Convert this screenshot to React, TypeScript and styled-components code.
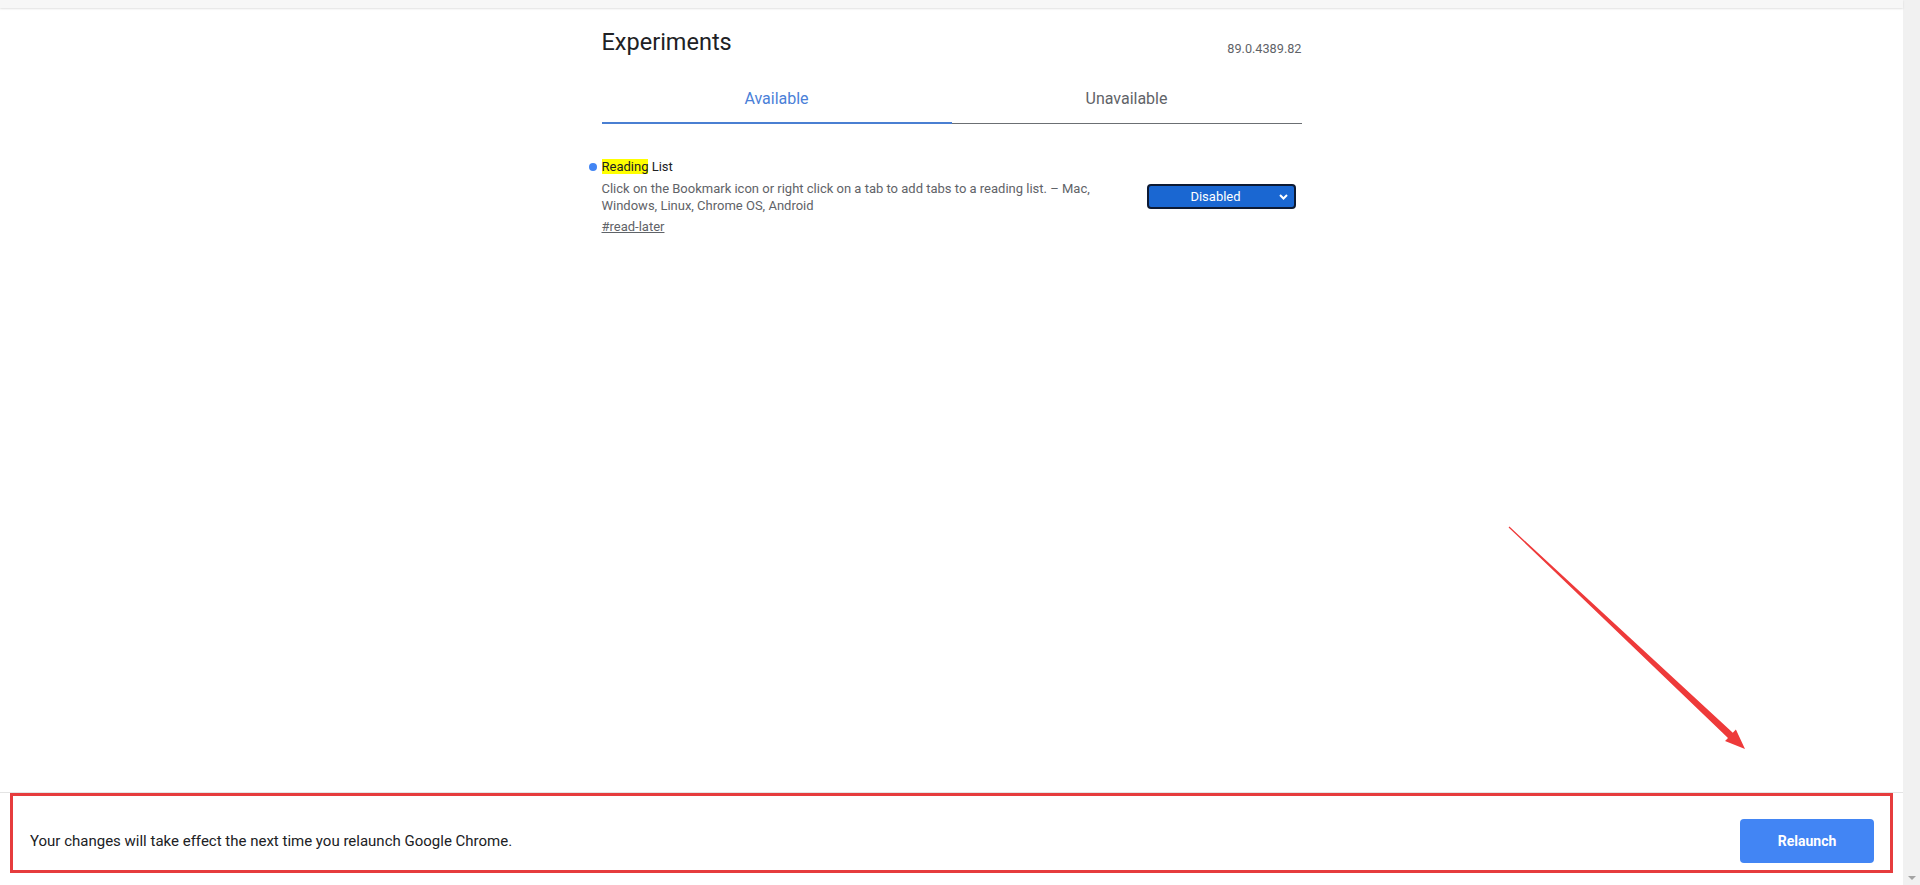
import * as React from "react";
import styled, { createGlobalStyle } from "styled-components";

const GlobalStyle = createGlobalStyle`
  html, body {
    margin: 0;
    height: 100%;
    overflow: hidden;
    background: #fff;
    font-family: Roboto, "Liberation Sans", sans-serif;
  }
  #root {
    height: 100%;
  }
`;

const Shell = styled.div`
  display: flex;
  width: 100vw;
  height: 100vh;
`;

const Page = styled.div`
  position: relative;
  flex: 1;
  display: flex;
  flex-direction: column;
  min-width: 0;
  background: #fff;
`;

const TopStrip = styled.div`
  height: 8px;
  flex: 0 0 8px;
  background: #f7f7f7;
  box-shadow: 0 1px 2px rgba(0, 0, 0, 0.12);
  position: relative;
  z-index: 1;
`;

const Main = styled.main`
  flex: 1;
  display: flex;
  justify-content: center;
`;

const Column = styled.div`
  width: 700px;
`;

const HeaderRow = styled.div`
  display: flex;
  justify-content: space-between;
  align-items: flex-start;
  margin-top: 20px;
`;

const Title = styled.h1`
  margin: 0;
  font-size: 23.5px;
  line-height: 28px;
  font-weight: 400;
  color: #202124;
`;

const Version = styled.span`
  margin-top: 13px;
  font-size: 12.7px;
  line-height: 16px;
  color: #5f6368;
`;

const Tabs = styled.div`
  display: flex;
  margin-top: 20px;
`;

const Tab = styled.div<{ active?: boolean }>`
  flex: 1;
  text-align: center;
  font-size: 16px;
  line-height: 20px;
  padding: 11.5px 0 ${(p) => (p.active ? "13.5px" : "14.5px")};
  color: ${(p) => (p.active ? "#4a80d8" : "#5f6368")};
  border-bottom: ${(p) => (p.active ? "2px solid #4a7fd2" : "1px solid #6b6f73")};
`;

const Experiment = styled.div`
  display: flex;
  align-items: center;
  justify-content: space-between;
  margin-top: 34.5px;
`;

const ExperimentText = styled.div`
  width: 510px;
`;

const Name = styled.div`
  position: relative;
  font-size: 13px;
  line-height: 16px;
  color: #202124;

  &::before {
    content: "";
    position: absolute;
    left: -13px;
    top: 4.5px;
    width: 8px;
    height: 8px;
    border-radius: 50%;
    background: #4285f4;
  }
`;

const Highlight = styled.mark`
  background: #ffff00;
  color: #202124;
`;

const Description = styled.p`
  margin: 5px 0 0;
  font-size: 13px;
  line-height: 17.5px;
  color: #5f6368;
`;

const Permalink = styled.a`
  display: inline-block;
  margin-top: 3px;
  font-size: 13px;
  line-height: 17.5px;
  color: #5f6368;
  text-decoration: underline;
`;

const SelectBox = styled.div`
  box-sizing: border-box;
  width: 149px;
  height: 25px;
  margin-right: 6px;
  display: flex;
  align-items: center;
  padding: 0 6px 0 4px;
  background: #1a67d2;
  border: 2px solid #0d1a33;
  border-radius: 4px;
  color: #fff;
  font-size: 13px;
`;

const SelectLabel = styled.span`
  flex: 1;
  text-align: center;
`;

const Footer = styled.footer`
  flex: 0 0 auto;
  display: flex;
  justify-content: space-between;
  align-items: center;
  padding: 26px 29px 22px 30px;
  border-top: 1px solid #e4e4e4;
  background: #fff;
`;

const FooterText = styled.span`
  font-size: 15px;
  line-height: 20px;
  color: #202124;
`;

const RelaunchButton = styled.button`
  width: 134px;
  height: 44px;
  border: none;
  border-radius: 4px;
  background: #4285f4;
  color: #fff;
  font-family: Roboto, "Liberation Sans", sans-serif;
  font-size: 14px;
  font-weight: 700;
`;

const RedFrame = styled.div`
  position: absolute;
  left: 10px;
  top: 793px;
  width: 1883px;
  height: 80px;
  box-sizing: border-box;
  border: 3px solid #e63c3d;
  pointer-events: none;
`;

const ArrowLayer = styled.svg`
  position: absolute;
  left: 0;
  top: 0;
  pointer-events: none;
`;

const Scrollbar = styled.div`
  width: 17px;
  flex: 0 0 17px;
  background: #f1f1f1;
  display: flex;
  flex-direction: column;
  justify-content: flex-end;
  align-items: center;
  padding-bottom: 5px;
  box-sizing: border-box;
`;

const ScrollArrow = styled.div`
  width: 0;
  height: 0;
  border-left: 4px solid transparent;
  border-right: 4px solid transparent;
  border-top: 4px solid #a3a3a3;
`;

const Chevron = () => (
  <svg width="9" height="6" viewBox="0 0 9 6">
    <path d="M1 1 L4.5 4.5 L8 1" fill="none" stroke="#fff" strokeWidth="2" />
  </svg>
);

const Arrow = () => (
  <ArrowLayer width="1903" height="885">
    <polygon
      fill="#ee3a3a"
      points="1508.6,527.4 1728,737.9 1725,741.1 1745,749 1735.9,729.5 1732.8,732.8 1509.4,526.6"
    />
  </ArrowLayer>
);

export default function App() {
  return (
    <Shell>
      <GlobalStyle />
      <Page>
        <TopStrip />
        <Main>
          <Column>
            <HeaderRow>
              <Title>Experiments</Title>
              <Version>89.0.4389.82</Version>
            </HeaderRow>
            <Tabs>
              <Tab active>Available</Tab>
              <Tab>Unavailable</Tab>
            </Tabs>
            <Experiment>
              <ExperimentText>
                <Name>
                  <Highlight>Reading</Highlight> List
                </Name>
                <Description>
                  Click on the Bookmark icon or right click on a tab to add tabs to a reading list. – Mac,
                  Windows, Linux, Chrome OS, Android
                </Description>
                <Permalink>#read-later</Permalink>
              </ExperimentText>
              <SelectBox>
                <SelectLabel>Disabled</SelectLabel>
                <Chevron />
              </SelectBox>
            </Experiment>
          </Column>
        </Main>
        <Footer>
          <FooterText>Your changes will take effect the next time you relaunch Google Chrome.</FooterText>
          <RelaunchButton>Relaunch</RelaunchButton>
        </Footer>
        <RedFrame />
        <Arrow />
      </Page>
      <Scrollbar>
        <ScrollArrow />
      </Scrollbar>
    </Shell>
  );
}
